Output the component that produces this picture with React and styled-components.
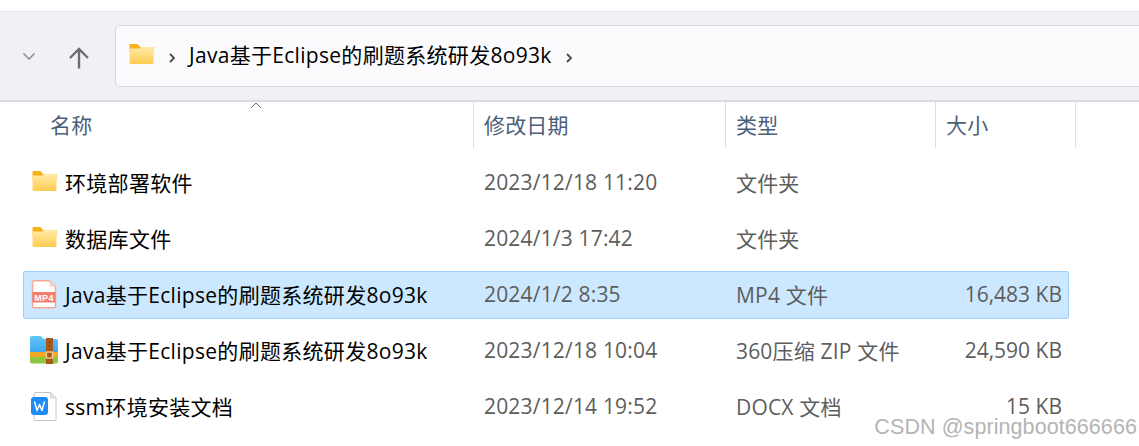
import styled, { createGlobalStyle } from "styled-components";

const GlobalStyle = createGlobalStyle`
  html, body {
    margin: 0;
    padding: 0;
    background: #fff;
    overflow: hidden;
  }
  body {
    font-family: "Open Sans", "Noto Sans CJK SC", sans-serif;
  }
`;

const Page = styled.div`
  position: relative;
  width: 1139px;
  height: 446px;
  padding-top: 11px;
  box-sizing: border-box;
  overflow: hidden;
`;

const Toolbar = styled.div`
  height: 91px;
  box-sizing: border-box;
  display: flex;
  align-items: center;
  padding-left: 21px;
  background: #f0f1f5;
  border-top: 1px solid #e5e6ea;
  border-bottom: 2px solid #dcdde1;
`;

const NavButton = styled.div`
  display: flex;
  align-items: center;
  justify-content: center;
  flex: none;
  width: ${(p) => p.$width}px;
  margin-left: ${(p) => p.$offset ?? 0}px;
  padding-top: ${(p) => p.$drop ?? 0}px;
  color: ${(p) => p.$color};
`;

const AddressBar = styled.div`
  flex: 1;
  height: 62px;
  box-sizing: border-box;
  margin-left: 6px;
  margin-right: -8px;
  display: flex;
  align-items: center;
  padding: 0 0 2px 13px;
  background: #fbfbfd;
  border: 1px solid #d8d9dd;
  border-radius: 5px;
`;

const Crumb = styled.span`
  font-size: 21px;
  letter-spacing: 0.3px;
  color: #000;
  margin: -2px 13px 0 13px;
  white-space: nowrap;
`;

const CrumbArrow = styled.svg`
  flex: none;
  margin: 5px 0 0 ${(p) => p.$gap ?? 0}px;
`;

const HeaderRow = styled.div`
  position: relative;
  display: grid;
  grid-template-columns: 474px 252px 210px 140px;
  height: 46px;
`;

const HeaderCell = styled.div`
  display: flex;
  align-items: center;
  padding-left: ${(p) => p.$pad}px;
  padding-bottom: 2px;
  font-size: 21px;
  letter-spacing: 0.18px;
  color: #4c607a;
  border-right: 1px solid #e0e0e0;
  box-sizing: border-box;
`;

const SortCaret = styled.svg`
  position: absolute;
  left: 250px;
  top: 0;
`;

const Rows = styled.div`
  display: flex;
  flex-direction: column;
  gap: 8px;
  margin: 11px 0 0 23px;
  width: 1046px;
`;

const Row = styled.div`
  display: grid;
  grid-template-columns: 450px 252px 210px 132px;
  height: 48px;
  padding-bottom: 2px;
  box-sizing: border-box;
  align-items: center;
  border-radius: 2px;
  border: 1px solid ${(p) => (p.$selected ? "#9fd0fb" : "transparent")};
  background: ${(p) => (p.$selected ? "#cce8ff" : "transparent")};
`;

const NameCell = styled.div`
  display: flex;
  align-items: center;
  gap: 7px;
  padding-left: 6px;
  font-size: 21px;
  letter-spacing: 0.3px;
  color: #000;
  white-space: nowrap;
`;

const IconSlot = styled.div`
  display: flex;
  align-items: center;
  justify-content: center;
  width: 28px;
  height: 32px;
  flex: none;
`;

const InfoCell = styled.div`
  padding-left: 10px;
  font-size: 21px;
  letter-spacing: 0.18px;
  color: #5d5d5d;
  white-space: nowrap;
`;

const SizeCell = styled(InfoCell)`
  padding-left: 0;
  padding-right: 6px;
  letter-spacing: 0;
  text-align: right;
`;

const Watermark = styled.div`
  position: absolute;
  right: 2px;
  bottom: 6px;
  font-family: "Liberation Sans", sans-serif;
  font-size: 21.5px;
  letter-spacing: 0.08px;
  color: #b4b4b4;
  background: rgba(255, 255, 255, 0.55);
  white-space: nowrap;
`;

const FolderIcon = () => (
  <svg width="25" height="20" viewBox="0 0 24 20" style={{ marginBottom: 2, flex: "none" }}>
    <defs>
      <linearGradient id="fold" x1="0" y1="0" x2="0" y2="1">
        <stop offset="0" stopColor="#ffeba8" />
        <stop offset="1" stopColor="#fdcb50" />
      </linearGradient>
    </defs>
    <path d="M0 1.200C0 .5.500 0 1.200 0h6.300c.4 0 .8.200 1 .5L10.500 3H24v5H0z" fill="#f8b01d" />
    <path d="M0 4.500h10L11.500 3h11.300c.7 0 1.200.5 1.200 1.200v14.600c0 .7-.5 1.200-1.200 1.200H1.200C.5 20 0 19.500 0 18.800z" fill="url(#fold)" />
  </svg>
);

const Mp4Icon = () => (
  <svg width="26" height="29" viewBox="0 0 26 29">
    <path d="M1.500 2.200c0-.8.600-1.400 1.400-1.400h15.600l6 6v19.600c0 .8-.6 1.400-1.400 1.400H2.900c-.8 0-1.400-.6-1.400-1.400z" fill="#fff" stroke="#f5a896" strokeWidth="1.500" />
    <path d="M18.500.8v6h6z" fill="#f9d5cd" />
    <rect x="1.500" y="12" width="23" height="10.500" fill="#f0806c" />
    <text x="13" y="21" textAnchor="middle" fontFamily="Liberation Sans, sans-serif" fontWeight="700" fontSize="9" fill="#fff">MP4</text>
  </svg>
);

const ZipIcon = () => (
  <svg width="28" height="28" viewBox="0 0 28 28">
    <defs>
      <linearGradient id="zipTop" x1="0" y1="0" x2="0" y2="1">
        <stop offset="0" stopColor="#62c6fb" />
        <stop offset="1" stopColor="#3fa5ee" />
      </linearGradient>
    </defs>
    <path d="M0 2C0 .9.900 0 2 0h8c.7 0 1.300.3 1.700.8L13.500 3H26c1.100 0 2 .9 2 2v12H0z" fill="url(#zipTop)" />
    <rect x="0" y="16" width="28" height="5" fill="#f5a623" />
    <path d="M0 21h28v4.500c0 1.100-.9 2-2 2H2c-1.100 0-2-.9-2-2z" fill="#8ec63f" />
    <rect x="16" y="2" width="7" height="26" fill="#a8591b" />
    <rect x="16.500" y="16" width="6" height="6" fill="none" stroke="#f3d491" strokeWidth="1.300" />
    <circle cx="19.500" cy="6" r=".7" fill="#6e3a10" />
    <circle cx="19.500" cy="10" r=".7" fill="#6e3a10" />
  </svg>
);

const DocIcon = () => (
  <svg width="26" height="29" viewBox="0 0 26 29">
    <path d="M3 1.500c0-.6.400-1 1-1h15.500L25 6v21.500c0 .6-.4 1-1 1H4c-.6 0-1-.4-1-1z" fill="#fff" stroke="#bfc4cf" />
    <path d="M19.500.5V6H25z" fill="#e6e8ee" stroke="#bfc4cf" strokeWidth=".6" />
    <rect x="0" y="5" width="17" height="18" rx="3" fill="#1f8bf5" />
    <path d="M3.500 9.500l2.500 9 2.500-6 2.500 6 2.500-9" fill="none" stroke="#fff" strokeWidth="1.500" strokeLinejoin="round" />
  </svg>
);

const Chevron = ({ gap }) => (
  <CrumbArrow $gap={gap} width="8" height="12" viewBox="0 0 8 12">
    <path d="M2 2l4 4-4 4" fill="none" stroke="#4a4a4a" strokeWidth="1.800" />
  </CrumbArrow>
);

const FILE_NAME = "Java基于Eclipse的刷题系统研发8o93k";

const files = [
  { icon: <FolderIcon />, name: "环境部署软件", date: "2023/12/18 11:20", type: "文件夹", size: "" },
  { icon: <FolderIcon />, name: "数据库文件", date: "2024/1/3 17:42", type: "文件夹", size: "" },
  { icon: <Mp4Icon />, name: FILE_NAME, date: "2024/1/2 8:35", type: "MP4 文件", size: "16,483 KB", selected: true },
  { icon: <ZipIcon />, name: FILE_NAME, date: "2023/12/18 10:04", type: "360压缩 ZIP 文件", size: "24,590 KB" },
  { icon: <DocIcon />, name: "ssm环境安装文档", date: "2023/12/14 19:52", type: "DOCX 文档", size: "15 KB" },
];

export default function App() {
  return (
    <>
      <GlobalStyle />
      <Page>
        <Toolbar>
          <NavButton $width={16} $color="#8c8c8c">
            <svg width="14" height="9" viewBox="0 0 14 9">
              <path d="M1.500 1.500L7 7l5.500-5.500" fill="none" stroke="currentColor" strokeWidth="1.500" />
            </svg>
          </NavButton>
          <NavButton $width={60} $offset={12} $drop={4} $color="#6d6d6d">
            <svg width="22" height="22" viewBox="0 0 22 22">
              <path d="M11 21.500V2M2 11l9-9 9 9" fill="none" stroke="currentColor" strokeWidth="2.400" />
            </svg>
          </NavButton>
          <AddressBar>
            <FolderIcon />
            <Chevron gap={14} />
            <Crumb>{FILE_NAME}</Crumb>
            <Chevron />
          </AddressBar>
        </Toolbar>
        <HeaderRow>
          <HeaderCell $pad={50}>名称</HeaderCell>
          <HeaderCell $pad={10}>修改日期</HeaderCell>
          <HeaderCell $pad={10}>类型</HeaderCell>
          <HeaderCell $pad={10}>大小</HeaderCell>
          <SortCaret width="12" height="8" viewBox="0 0 12 8">
            <path d="M1 6l5-5 5 5" fill="none" stroke="#6b6b6b" />
          </SortCaret>
        </HeaderRow>
        <Rows>
          {files.map((f) => (
            <Row key={f.type + f.date} $selected={f.selected}>
              <NameCell>
                <IconSlot>{f.icon}</IconSlot>
                {f.name}
              </NameCell>
              <InfoCell>{f.date}</InfoCell>
              <InfoCell>{f.type}</InfoCell>
              <SizeCell>{f.size}</SizeCell>
            </Row>
          ))}
        </Rows>
        <Watermark>CSDN @springboot666666</Watermark>
      </Page>
    </>
  );
}
